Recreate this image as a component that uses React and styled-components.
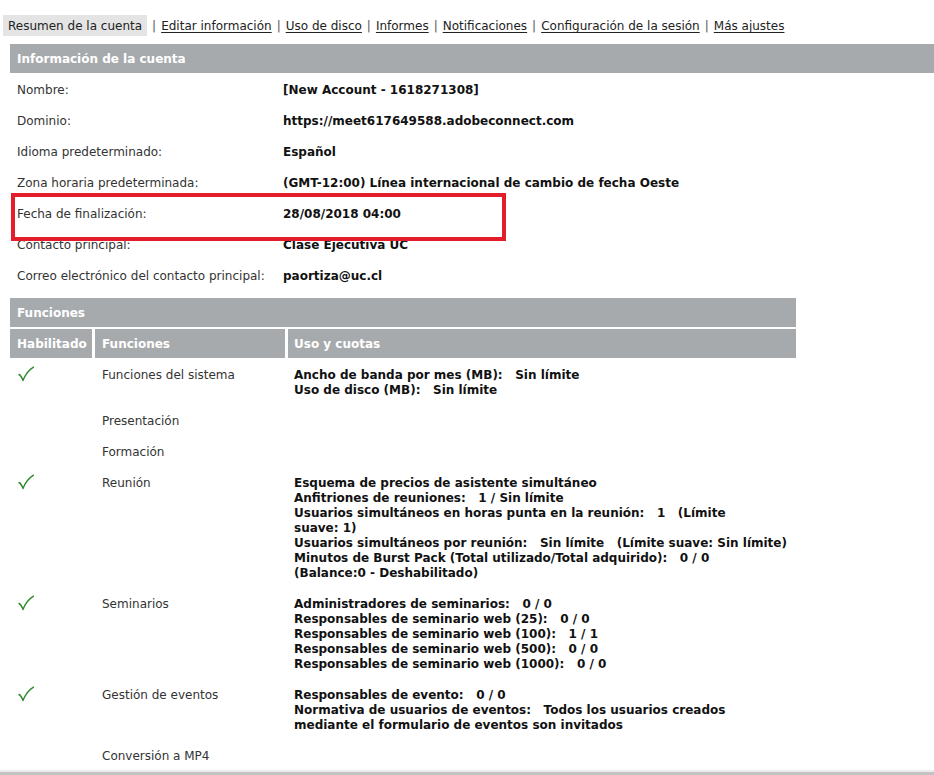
import React from 'react'
import styled, { createGlobalStyle } from 'styled-components'

const GlobalStyle = createGlobalStyle`
    html, body {
        margin: 0;
        padding: 0;
        background: #fff;
        overflow: hidden;
    }
    body {
        font-family: "DejaVu Sans", Verdana, sans-serif;
        font-size: 12px;
        line-height: 15px;
        color: #333;
    }
`

const Page = styled.div`
    padding-top: 15px;
    height: 760px;
    display: flex;
    flex-direction: column;
`

const Nav = styled.div`
    display: flex;
    align-items: center;
    padding-left: 3px;
    height: 21px;
`
const ActiveTab = styled.span`
    background: #e4e4e4;
    color: #222;
    padding: 4px 5px 2px;
    line-height: 15px;
`
const Sep = styled.span`
    color: #555;
    margin: 0 5px;
    padding-top: 2px;
`
const NavLink = styled.a`
    color: #222;
    padding-top: 2px;
    text-decoration: underline;
    text-underline-offset: 2px;
`

const Section = styled.section`
    position: relative;
    margin-left: 10px;
    margin-top: ${p => p.$top || 0}px;
    width: ${p => (p.$width ? `${p.$width}px` : 'auto')};
`
const SectionHeader = styled.div`
    background: #a7aaad;
    color: #fff;
    font-weight: bold;
    height: 29px;
    line-height: 31px;
    padding-left: 7px;
`
const InfoRow = styled.div`
    display: grid;
    grid-template-columns: 273px 1fr;
`
const InfoLabel = styled.div`
    padding: 10px 7px 6px;
    color: #333;
`
const InfoValue = styled.div`
    padding: 10px 0 6px;
    font-weight: bold;
    color: #111;
`
const Highlight = styled.div`
    position: absolute;
    left: 1px;
    top: 149px;
    width: 487px;
    height: 40px;
    border: 4px solid #e31d2b;
    pointer-events: none;
`

const Grid = styled.div`
    display: grid;
    grid-template-columns: 82px 190px 508px;
    column-gap: 3px;
    margin-top: ${p => p.$gap || 0}px;
`
const HeadCell = styled.div`
    background: #a7aaad;
    color: #fff;
    font-weight: bold;
    height: 29px;
    line-height: 31px;
    padding-left: ${p => p.$pad || 7}px;
`
const Cell = styled.div`
    padding: 10px 0 6px ${p => p.$pad || 7}px;
    color: ${p => (p.$bold ? '#111' : '#333')};
    font-weight: ${p => (p.$bold ? 'bold' : 'normal')};
`
const CheckIcon = styled.svg`
    display: block;
    width: 16px;
    height: 16px;
    margin: -2px 0 0 1px;
`
const Line = styled.div`
    white-space: pre;
`

const Footer = styled.div`
    margin-top: auto;
    height: 5px;
    border-top: 2px solid #ececec;
    background: #c2c2c2;
`

const Check = () => (
    <CheckIcon viewBox="0 0 16 16">
        <path
            d="M1 8.5 Q3.2 9.6 5 14.5 Q8.5 5.5 15.5 1.2"
            fill="none"
            stroke="#2b8a2b"
            strokeWidth="1.4"
            strokeLinecap="round"
            strokeLinejoin="round"
        />
    </CheckIcon>
)

const info = [
    ['Nombre:', '[New Account - 1618271308]'],
    ['Dominio:', 'https://meet617649588.adobeconnect.com'],
    ['Idioma predeterminado:', 'Español'],
    ['Zona horaria predeterminada:', '(GMT-12:00) Línea internacional de cambio de fecha Oeste'],
    ['Fecha de finalización:', '28/08/2018 04:00'],
    ['Contacto principal:', 'Clase Ejecutiva UC'],
    ['Correo electrónico del contacto principal:', 'paortiza@uc.cl'],
]

const features = [
    {
        on: true,
        name: 'Funciones del sistema',
        lines: ['Ancho de banda por mes (MB):   Sin límite', 'Uso de disco (MB):   Sin límite'],
    },
    { on: false, name: 'Presentación', lines: [] },
    { on: false, name: 'Formación', lines: [] },
    {
        on: true,
        name: 'Reunión',
        lines: [
            'Esquema de precios de asistente simultáneo',
            'Anfitriones de reuniones:   1 / Sin límite',
            'Usuarios simultáneos en horas punta en la reunión:   1   (Límite',
            'suave: 1)',
            'Usuarios simultáneos por reunión:   Sin límite   (Límite suave: Sin límite)',
            'Minutos de Burst Pack (Total utilizado/Total adquirido):   0 / 0',
            '(Balance:0 - Deshabilitado)',
        ],
    },
    {
        on: true,
        name: 'Seminarios',
        lines: [
            'Administradores de seminarios:   0 / 0',
            'Responsables de seminario web (25):   0 / 0',
            'Responsables de seminario web (100):   1 / 1',
            'Responsables de seminario web (500):   0 / 0',
            'Responsables de seminario web (1000):   0 / 0',
        ],
    },
    {
        on: true,
        name: 'Gestión de eventos',
        lines: [
            'Responsables de evento:   0 / 0',
            'Normativa de usuarios de eventos:   Todos los usuarios creados',
            'mediante el formulario de eventos son invitados',
        ],
    },
    { on: false, name: 'Conversión a MP4', lines: [] },
]

const links = ['Editar información', 'Uso de disco', 'Informes', 'Notificaciones', 'Configuración de la sesión', 'Más ajustes']

const App = () => {
    return (
        <>
            <GlobalStyle />
            <Page>
                <Nav>
                    <ActiveTab>Resumen de la cuenta</ActiveTab>
                    {links.map(l => (
                        <React.Fragment key={l}>
                            <Sep>|</Sep>
                            <NavLink href="#">{l}</NavLink>
                        </React.Fragment>
                    ))}
                </Nav>

                <Section $top={8}>
                    <SectionHeader>Información de la cuenta</SectionHeader>
                    {info.map(([k, v]) => (
                        <InfoRow key={k}>
                            <InfoLabel>{k}</InfoLabel>
                            <InfoValue>{v}</InfoValue>
                        </InfoRow>
                    ))}
                    <Highlight />
                </Section>

                <Section $top={8} $width={786}>
                    <SectionHeader>Funciones</SectionHeader>
                    <Grid $gap={2}>
                        <HeadCell>Habilitado</HeadCell>
                        <HeadCell>Funciones</HeadCell>
                        <HeadCell $pad={6}>Uso y cuotas</HeadCell>
                    </Grid>
                    {features.map(f => (
                        <Grid key={f.name}>
                            <Cell>{f.on && <Check />}</Cell>
                            <Cell>{f.name}</Cell>
                            <Cell $bold $pad={6}>
                                {f.lines.map((t, i) => (
                                    <Line key={i}>{t}</Line>
                                ))}
                            </Cell>
                        </Grid>
                    ))}
                </Section>

                <Footer />
            </Page>
        </>
    )
}

export default App
